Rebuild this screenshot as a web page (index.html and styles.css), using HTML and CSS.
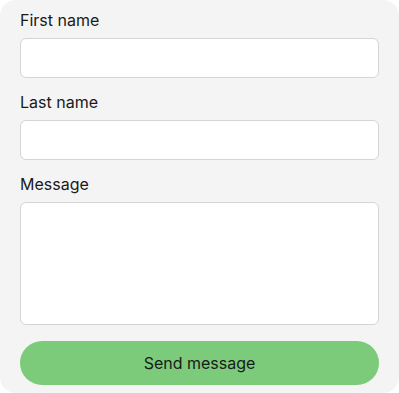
FILE: index.html
```html
<!DOCTYPE html>
<html lang="en">
<head>
    <meta charset="UTF-8">
    <meta name="viewport" content="width=device-width, initial-scale=1.0">
    <title>Contact</title>
    <link rel="stylesheet" href="styles.css">
</head>
<body>
    <form class="card">
        <div class="field">
            <label for="first">First name</label>
            <input type="text" id="first" name="first">
        </div>
        <div class="field">
            <label for="last">Last name</label>
            <input type="text" id="last" name="last">
        </div>
        <div class="field">
            <label for="message">Message</label>
            <textarea id="message" name="message"></textarea>
        </div>
        <button type="button">Send message</button>
    </form>
</body>
</html>
```

FILE: styles.css
```css
body {
    margin: 0;
    background: #ffffff;
    font-family: 'Inter', sans-serif;
    color: #1a1a1a;
}
.card {
    width: 399px;
    box-sizing: border-box;
    background: #f4f4f4;
    border-radius: 16px;
    padding: 8px 20px 8px;
}
.field {
    display: flex;
    flex-direction: column;
    gap: 6px;
    margin-bottom: 12px;
}
.field label {
    font-size: 16px;
    line-height: 24px;
}
.field input, .field textarea {
    box-sizing: border-box;
    width: 100%;
    height: 40px;
    border: 1px solid #d4d4d4;
    border-radius: 6px;
    background: #ffffff;
    font-family: inherit;
    font-size: 16px;
    padding: 8px 12px;
    margin: 0;
}
.field textarea {
    height: 123px;
    resize: none;
    display: block;
}
.card .field:last-of-type {
    margin-bottom: 16px;
}
button {
    display: block;
    width: 100%;
    height: 44px;
    border: none;
    border-radius: 22px;
    background: #7bcb7b;
    color: #1a1a1a;
    font-family: inherit;
    font-size: 16px;
    cursor: pointer;
}
```
